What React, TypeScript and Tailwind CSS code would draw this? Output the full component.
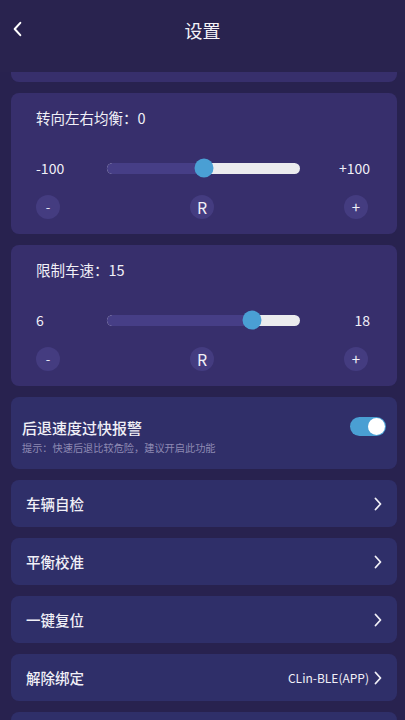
import { useState } from "react";

const font = { fontFamily: '"Noto Sans CJK SC", "Noto Sans", sans-serif' };

const Chevron = ({ className }: { className?: string }) => (
  <svg viewBox="0 0 8 14" className={className} fill="none" stroke="currentColor" strokeWidth="1.8" strokeLinecap="round" strokeLinejoin="round">
    <polyline points="1.5,1.5 6.5,7 1.5,12.5" />
  </svg>
);

type SliderCardProps = {
  title: string;
  value: number;
  min: number;
  max: number;
  minLabel: string;
  maxLabel: string;
};

const SliderCard = ({ title, value, min, max, minLabel, maxLabel }: SliderCardProps) => {
  const pct = ((value - min) / (max - min)) * 100;
  return (
    <div className="ml-[11px] mr-[8px] rounded-lg bg-[#372f6c] pl-[25px] pr-[27px] pt-[15px] pb-[15px]">
      <div className="text-[14.5px] leading-[20px] text-[#f1f0f7]">{title}</div>
      <div className="mt-[29px] flex h-[22px] items-center text-[14px] text-[#f1f0f7]">
        <div className="w-[71px]">{minLabel}</div>
        <div className="relative h-[11px] w-[193px] rounded-full bg-[#ebebee]">
          <div className="absolute left-0 top-0 h-full rounded-l-full bg-[#463e86]" style={{ width: `${pct}%` }} />
          <div
            className="absolute top-1/2 h-[19px] w-[19px] -translate-x-1/2 -translate-y-1/2 rounded-full bg-[#4a9fd4]"
            style={{ left: `${pct}%` }}
          />
        </div>
        <div className="flex-1 text-right">{maxLabel}</div>
      </div>
      <div className="mt-[16px] flex items-center justify-between pr-[2px]">
        <button className="flex h-[24px] w-[24px] items-center justify-center rounded-full bg-[#443c80] text-[13px] text-[#e8e6f2]">-</button>
        <button className="flex h-[24px] w-[24px] items-center justify-center rounded-full bg-[#443c80] text-[16px] text-[#f1f0f7]">R</button>
        <button className="flex h-[24px] w-[24px] items-center justify-center rounded-full bg-[#443c80] text-[15px] text-[#f1f0f7]">+</button>
      </div>
    </div>
  );
};

const NavRow = ({ label, extra }: { label: string; extra?: string }) => (
  <div className="ml-[11px] mr-[8px] flex h-[47px] items-center justify-between rounded-lg bg-[#2f2f69] pl-[15px] pr-[15px] text-[#f1f0f7]">
    <span className="text-[14.5px] font-medium">{label}</span>
    <div className="flex items-center gap-[5px]">
      {extra && <span className="text-[12px]">{extra}</span>}
      <Chevron className="h-[14px] w-[8px]" />
    </div>
  </div>
);

export default function App() {
  const [alarm, setAlarm] = useState(true);

  return (
    <div className="h-[720px] w-[405px] overflow-hidden bg-[#28224f]" style={font}>
      <header className="relative flex h-[72px] items-center justify-center pb-[12px] bg-[#29234f]">
        <button className="absolute left-[13px] top-[21px] text-white">
          <Chevron className="h-[16px] w-[9px] rotate-180" />
        </button>
        <h1 className="text-[18px] text-[#f4f3f8]">设置</h1>
      </header>

      <div className="flex flex-col gap-[11px]">
        <div className="ml-[11px] mr-[8px] h-[10px] rounded-b-lg bg-[#372f6c]" />

        <SliderCard title="转向左右均衡：0" value={0} min={-100} max={100} minLabel="-100" maxLabel="+100" />
        <SliderCard title="限制车速：15" value={15} min={6} max={18} minLabel="6" maxLabel="18" />

        <div className="ml-[11px] mr-[8px] flex h-[72px] items-center justify-between rounded-lg bg-[#302f69] pl-[11px] pr-[11px]">
          <div className="flex flex-col pt-[6px]">
            <span className="text-[15px] font-medium leading-[20px] text-[#f1f0f7]">后退速度过快报警</span>
            <span className="mt-[3px] text-[10.2px] leading-[14px] text-[#8e8ab3]">提示：快速后退比较危险，建议开启此功能</span>
          </div>
          <button
            onClick={() => setAlarm(!alarm)}
            className={`mb-[13px] flex h-[19px] w-[36px] items-center rounded-full px-[1px] ${alarm ? "justify-end bg-[#4a9fd3]" : "justify-start bg-[#5a5590]"}`}
          >
            <span className="h-[17px] w-[17px] rounded-full bg-white" />
          </button>
        </div>

        <NavRow label="车辆自检" />
        <NavRow label="平衡校准" />
        <NavRow label="一键复位" />
        <NavRow label="解除绑定" extra="CLin-BLE(APP)" />
        <div className="ml-[11px] mr-[8px] h-[47px] rounded-lg bg-[#2f2f69]" />
      </div>
    </div>
  );
}
